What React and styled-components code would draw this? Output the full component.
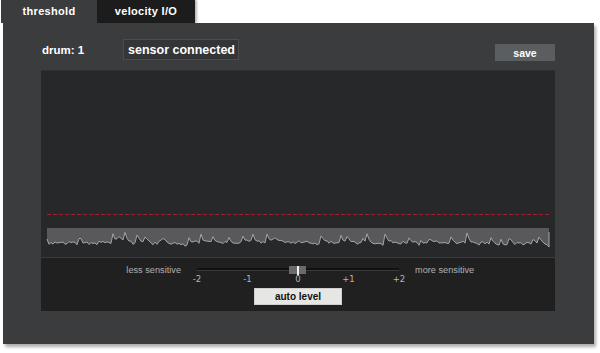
import React from "react";
import styled, { createGlobalStyle } from "styled-components";

const Global = createGlobalStyle`
  html, body { margin: 0; padding: 0; background: #ffffff; }
  body { font-family: "Liberation Sans", Arial, sans-serif; }
`;

const Page = styled.div`
  width: 600px;
  height: 353px;
  display: flex;
  flex-direction: column;
`;

const Tabs = styled.div`
  display: flex;
  height: 23px;
  padding-left: 1px;
`;

const Tab = styled.div`
  width: ${(p) => p.$w}px;
  height: 23px;
  display: flex;
  align-items: center;
  justify-content: center;
  background: ${(p) => (p.$active ? "#3b3c3e" : "#1c1c1d")};
  color: #ffffff;
  font-weight: bold;
  font-size: 11px;
  letter-spacing: 0.3px;
  padding-bottom: 1px;
  box-sizing: border-box;
  box-shadow: ${(p) => (p.$active ? "none" : "2px 0 2px rgba(0,0,0,0.28)")};
  position: relative;
  z-index: ${(p) => (p.$active ? 2 : 1)};
`;

const Panel = styled.div`
  margin-left: 3px;
  width: 591px;
  height: 321px;
  background: #3b3c3e;
  box-shadow: 2px 3px 3px rgba(0, 0, 0, 0.32);
  box-sizing: border-box;
  padding: 16px 39px 0 38px;
  display: flex;
  flex-direction: column;
  position: relative;
  z-index: 1;
`;

const Header = styled.div`
  display: flex;
  align-items: center;
  height: 21px;
`;

const Drum = styled.div`
  width: 81px;
  padding-left: 1px;
  color: #ffffff;
  font-weight: bold;
  font-size: 11.5px;
`;

const Status = styled.div`
  height: 21px;
  box-sizing: border-box;
  border: 1px solid #4c4d50;
  background: #343537;
  color: #ffffff;
  font-weight: bold;
  font-size: 12.5px;
  padding: 0 4px;
  display: flex;
  align-items: center;
  width: 116px;
  white-space: nowrap;
`;

const Spacer = styled.div`
  flex: 1;
`;

const SaveButton = styled.div`
  width: 60px;
  height: 17px;
  margin-top: 6px;
  background: #5b5e61;
  color: #ffffff;
  font-weight: bold;
  font-size: 10.5px;
  display: flex;
  align-items: center;
  justify-content: center;
`;

const Chart = styled.div`
  margin-top: 10px;
  width: 514px;
  display: flex;
  flex-direction: column;
`;

const Plot = styled.div`
  height: 188px;
  background: #27282a;
  border-top: 1px solid #2e2f31;
  border-bottom: 1px solid #3a3b3d;
  box-sizing: border-box;
  display: flex;
`;

const Controls = styled.div`
  height: 53px;
  background: #202021;
  box-sizing: border-box;
  padding-top: 6px;
  display: flex;
  flex-direction: column;
  align-items: center;
`;

const SliderRow = styled.div`
  width: 100%;
  display: grid;
  grid-template-columns: 1fr auto 1fr;
  column-gap: 6px;
`;

const SideLabel = styled.div`
  justify-self: ${(p) => (p.$right ? "start" : "end")};
  color: #b0b0b0;
  font-family: "Liberation Sans", Arial, sans-serif;
  font-size: 9.2px;
  line-height: 12px;
`;

const SliderBlock = styled.div`
  width: 222px;
  display: flex;
  flex-direction: column;
`;

const TrackArea = styled.div`
  height: 10px;
  margin: 0 10px;
  position: relative;
  display: flex;
  align-items: center;
`;

const Track = styled.div`
  flex: 1;
  height: 2px;
  background: #111111;
  border-bottom: 1px solid #3a3a3a;
`;

const Thumb = styled.div`
  position: absolute;
  left: ${(p) => p.$left}px;
  top: 2px;
  width: 17px;
  height: 8px;
  background: #6a6a6c;
  display: flex;
  justify-content: center;
  &::after {
    content: "";
    width: 2px;
    height: 9px;
    background: #f2f2f2;
  }
`;

const Scale = styled.div`
  display: flex;
  justify-content: space-between;
`;

const Tick = styled.div`
  width: 20px;
  text-align: center;
  color: #b5b5b5;
  font-family: "DejaVu Sans", sans-serif;
  font-size: 8.5px;
  line-height: 10px;
`;

const AutoLevel = styled.div`
  margin-top: 4px;
  width: 88px;
  height: 17px;
  box-sizing: border-box;
  background: #e6e6e4;
  border: 1px solid #cfcfcf;
  color: #111111;
  font-weight: bold;
  font-size: 10px;
  display: flex;
  align-items: center;
  justify-content: center;
`;

function makeWave() {
  let seed = 987654;
  const r = () => {
    seed = (seed * 1103515245 + 12345) % 2147483648;
    return seed / 2147483648;
  };
  const pts = [];
  let spike = 0;
  let drift = 0;
  pts.push([0, 11]);
  for (let x = 2; x <= 500; x += 2) {
    if (spike < 1 && r() < 0.16) spike = 3 + r() * 7;
    drift = drift * 0.8 + (r() - 0.5) * 2.2;
    const base = 16.5 + drift - r() * 2.5;
    const y = base - spike;
    spike *= 0.5;
    pts.push([x, Math.max(3, Math.min(20, y))]);
  }
  pts.push([502, 19]);
  pts.push([502, 4]);
  return pts;
}

const wave = makeWave();

function Waveform() {
  const ox = 6;
  const oy = 157;
  const line = wave.map(([x, y]) => `${x + ox},${(y + oy).toFixed(1)}`).join(" ");
  const area =
    `M${ox},${oy} ` +
    wave.map(([x, y]) => `L${x + ox},${(y + oy).toFixed(1)}`).join(" ") +
    ` L${502 + ox},${oy} Z`;
  return (
    <svg width="514" height="186" viewBox="0 0 514 186">
      <line
        x1="6"
        y1="143.5"
        x2="508"
        y2="143.5"
        stroke="#a01f2b"
        strokeWidth="1"
        strokeDasharray="4 2"
      />
      <path d={area} fill="#59595b" />
      <polyline points={line} fill="none" stroke="#a6a6a6" strokeWidth="1" />
    </svg>
  );
}

export default function App() {
  const ticks = ["-2", "-1", "0", "+1", "+2"];
  return (
    <Page>
      <Global />
      <Tabs>
        <Tab $active $w={96}>threshold</Tab>
        <Tab $w={98}>velocity I/O</Tab>
      </Tabs>
      <Panel>
        <Header>
          <Drum>drum: 1</Drum>
          <Status>sensor connected</Status>
          <Spacer />
          <SaveButton>save</SaveButton>
        </Header>
        <Chart>
          <Plot>
            <Waveform />
          </Plot>
          <Controls>
            <SliderRow>
              <SideLabel>less sensitive</SideLabel>
              <SliderBlock>
                <TrackArea>
                  <Track />
                  <Thumb $left={92} />
                </TrackArea>
                <Scale>
                  {ticks.map((t) => (
                    <Tick key={t}>{t}</Tick>
                  ))}
                </Scale>
              </SliderBlock>
              <SideLabel $right>more sensitive</SideLabel>
            </SliderRow>
            <AutoLevel>auto level</AutoLevel>
          </Controls>
        </Chart>
      </Panel>
    </Page>
  );
}
